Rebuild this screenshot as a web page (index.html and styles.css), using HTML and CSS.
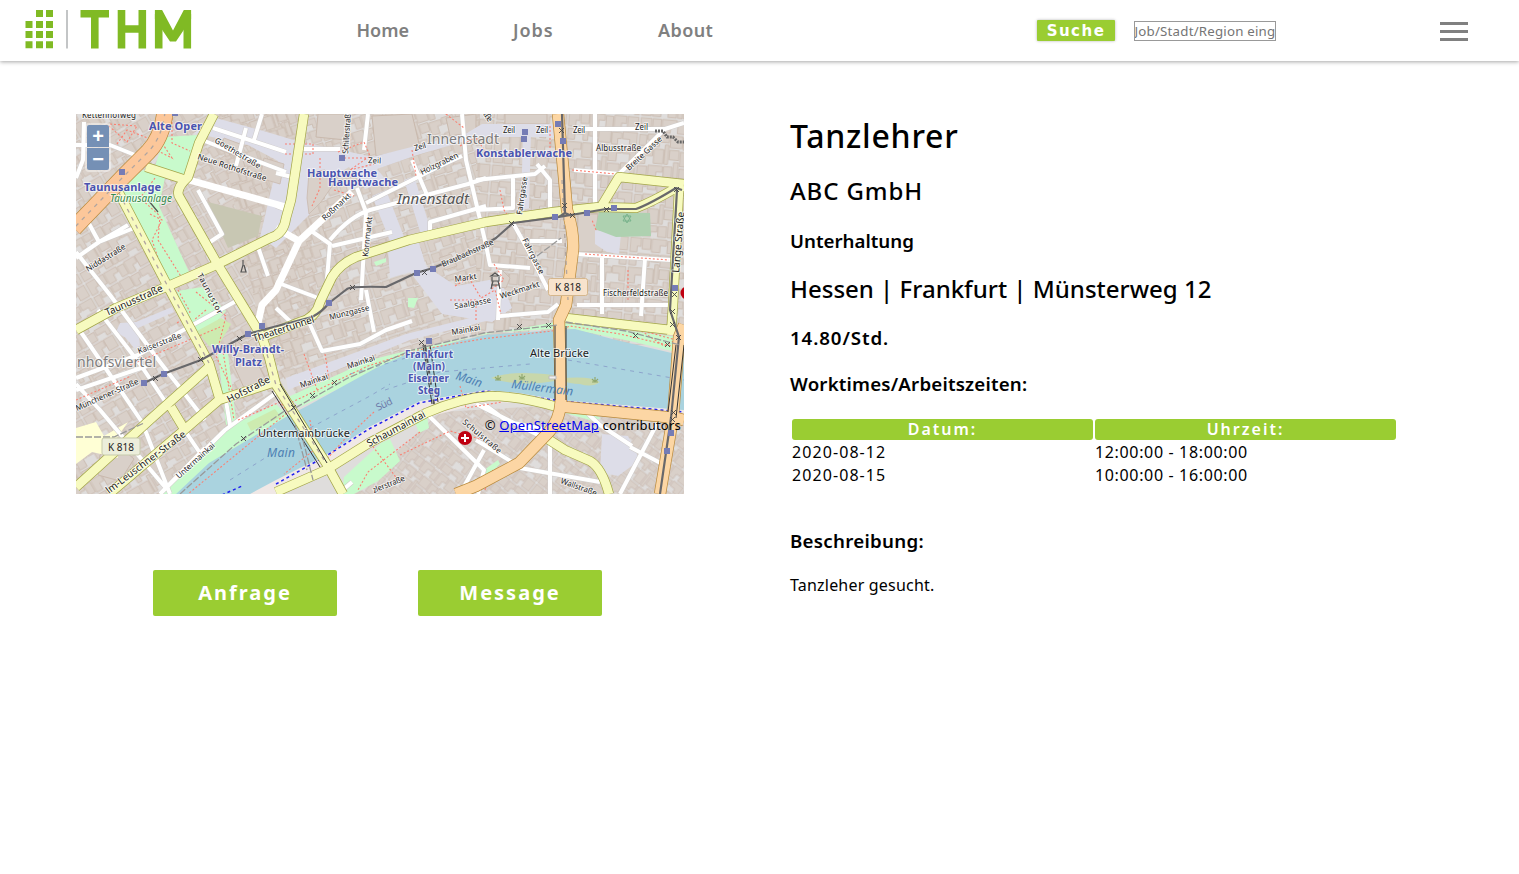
FILE: index.html
```html
<!DOCTYPE html>
<html lang="de">
<head>
<meta charset="utf-8">
<title>Tanzlehrer</title>
<link rel="stylesheet" href="styles.css">
</head>
<body>
<header class="topbar">
  <svg class="logo" width="168" height="40" viewBox="24 9 168 40" role="img" aria-label="THM">
    <g fill="#80ba24">
      <path d="M36 10h7v7h-7zM46 10h7v7h-7zM25.500 21h7v7h-7zM36 21h7v7h-7zM46 21h7v7h-7zM25.500 31h7v7h-7zM36 31h7v7h-7zM46 31h7v7h-7zM25.500 41.300h7v7h-7zM36 41.300h7v7h-7zM46 41.300h7v7h-7z"/>
    </g>
    <path d="M67 10V48.500" stroke="#b4b7b8" stroke-width="1.600"/>
    <g fill="none" stroke="#80ba24" stroke-width="7.600">
      <path d="M80.500 13.700H109M94.800 13V48.500"/>
      <path d="M121.500 10V48.500M142.300 10V48.500M121.500 29H142.300"/>
      <path d="M158.700 48.500V14M187.300 48.500V14"/>
    </g>
    <path fill="#80ba24" d="M154.900 10h7.200L173 30.500 183.800 10h7.300v9L176 41.500h-6L154.900 19z"/>
  </svg>
  <nav class="nav"><a class="n-home">Home</a><a class="n-jobs">Jobs</a><a class="n-about">About</a></nav>
  <button class="search-btn">Suche</button>
  <input class="search-input" placeholder="Job/Stadt/Region eingeben">
  <div class="burger"><i></i><i></i><i></i></div>
</header>
<main class="page">
  <section class="left">
    <div class="map">
      <svg class="map-svg" width="608" height="380" viewBox="76 114 608 380">
        <defs>
          <g id="blocks" fill="#d9d0c9" stroke="#c9b9ad" stroke-width=".7">
            <path d="M1 1h9v7h-3v5h-6zM11 1h7v9h-7zM19 1h12v5h-5v6h-7zM32 2h6v10h-6zM39 1h10v6h-4v6h-6zM50 1h9v11h-9z"/>
            <path d="M1 15h6v9h-6zM8 14h10v10h-4v-5h-6zM19 14h7v6h-7zM27 14h10v10h-10zM38 15h8v5h-3v5h-5zM47 14h12v10h-6v-4h-6z"/>
            <path d="M1 26h12v6h-6v7h-6zM14 26h8v12h-8zM23 22h3v16h-3zM27 26h8v8h-8zM36 27h11v5h-4v7h-7zM48 26h11v12h-5v-6h-6z"/>
            <path d="M1 41h8v8h-8zM10 40h12v5h-5v4h-7zM23 40h7v9h-7zM31 36h4v13h-4zM36 41h10v8h-10zM47 40h12v9h-4v-4h-8z"/>
          </g>
          <pattern id="b1" width="60" height="50" patternUnits="userSpaceOnUse" patternTransform="rotate(-30) scale(1.15)"><use href="#blocks"/></pattern>
          <pattern id="b2" width="60" height="50" patternUnits="userSpaceOnUse" patternTransform="rotate(-18) scale(1.1)"><use href="#blocks"/></pattern>
          <pattern id="b3" width="60" height="50" patternUnits="userSpaceOnUse" patternTransform="rotate(5) scale(1.2)"><use href="#blocks"/></pattern>
          <pattern id="b4" width="60" height="50" patternUnits="userSpaceOnUse" patternTransform="rotate(38)"><use href="#blocks"/></pattern>
        </defs>
        <rect x="76" y="114" width="608" height="380" fill="#dfdddc"/>
        <path fill="url(#b1)" d="M76 114H300L318 306 276 400 160 494H76z"/>
        <path fill="url(#b2)" d="M216 114H480V340L300 400 262 337z"/>
        <path fill="url(#b3)" d="M476 114H684V345H476z"/>
        <path fill="url(#b4)" d="M350 494 440 412 560 405 684 420V494z"/>
        <g fill="#d9d0c9" stroke="#c9b9ad">
          <path d="M318 114h30l-2 26-30-3zM372 116l40-2 8 34-44 8zM505 114h42v10h-42zM578 214h20l-2 20 8 4-2 14h-25zM236 340l18 16 14 28-22 8-12-26z"/>
          <path d="M100 455l18-10 16 14-14 22-22-6zM446 118l30-4v18l-26 4z"/>
        </g>

        <!-- pedestrian areas -->
        <g fill="#dddde8">
          <path d="M216 118l44 12 44 13 42 8 26 6 95-24 15-9h75v13h-78l-62 18-40 14 10 12-22 8-16-22-16 10-24 38-16 16-17 17-16-11 18-76-30-16-54-12z"/>
          <path d="M372 196l14-6 20 52-14 4zM404 180l10-4 18 58-10 4z"/>
          <path d="M388 250l30-10 8 26 30 20 44-8 12 30-20 14-50-8-32-42-20 6zM523 132h8l-2 76-8 2zM595 230l26 4-2 20-12-2-12-8z"/>
          <path d="M120 323l16-1 36-15 2 5-36 16 2 18-6 2-8-10-10-6zM286 378l120-44 80-20v7l-76 19-122 50z"/>
          <path d="M602 434l26 2 12 24-22 16-18-4z"/>
        </g>
        <g fill="#d9d0c9" stroke="#c9b9ad" stroke-width=".8">
          <path d="M309 172l16-2 10 12-14 20-12 12-2-16zM224 138l16 6-4 12-16-6zM264 158l20 6-4 20-20-6zM490 274l12-4 8 8-4 10-14-2zM439 258l12-4 6 12-12 4zM370 244l20-2-8 24h-10z"/>
        </g>
        <g fill="#c8facc">
          <path d="M164 137l33-2-10 42-11-2-21-9 4-12zM143 170l22 8-6 28 30 66 5 5-25 9-40-70-12-26zM177 291l25-4 24 24-18 20-18 6z"/>
          <path d="M218 354l10 0 8 66-10 5zM233 425l43-21 12 12-110 78h-17z"/>
          <path d="M288 397l82-37 40-10 72-15 74-13 14 2 108 13-2 15-46-11-64-13-80 5-76 22-110 52z"/>
          <path d="M344 477l37-34 9-4 10 22-22 20-24 13h-12zM415 422l12-6 2 12-10 5zM374 262l12-4v4l-10 4zM408 298l10 0-4 10-6-1zM565 413l18-2 18 7-8 3z"/>
          <path d="M484 470l14-10 2 4-14 13z"/>
        </g>
        <path d="M197 331l24-13 10 6-14 24-8-2zM247 423l28-14 6 8-30 14z" fill="#cdebb0"/>
        <path d="M208 202l54 14-4 20-30 12z" fill="#c8c7b3"/>
        <path d="M599 212l51 1 1 23-35 1-21-8z" fill="#aed1b0"/>
        <path d="M76 428l20-6 8 14 24-14-14 20 4 16-26-6-16 12z" fill="#ffffd5"/>

        <!-- river -->
        <path fill="#f0e8e6" d="M250 494l26-17 50-26 44-27 50-25 66-12 34 4 42 8 122 11v9l-122-10-42-6-34-1-58 15-50 26-52 26-47 25z"/>
        <path fill="#aad3df" d="M176 494L209 463 286 417 309 405 376 368 409 353 486 335 557 330 575 329 616 340 676 354 684 355V410L560 400 519 393 486 390 420 401 369 427 326 455 276 480 250 494z"/>
        <path d="M491 378q18-8 62-3l5 4q30-4 42 3-8 6-20 2-10 0-20-4-40 8-69-2z" fill="#c8d7ab"/>
        <path d="M310 428l60-32 20-12M350 374l70-20M385 390l55-18 90-8M568 360l116 20M230 480l35-22" fill="none" stroke="#8da5cc" stroke-width="1" stroke-dasharray="4 5"/>
        <path d="M276 483L326 455 369 428 419 402 486 390 519 394 561 400 684 411M222 494l20-9" transform="translate(0 1)" fill="none" stroke="#2020ef" stroke-width="1.500" stroke-dasharray="3 3"/>

        <!-- minor streets -->
        <g fill="none" stroke="#cfccca" stroke-width="5"><use href="#streets"/></g>
        <g fill="none" stroke="#fff" stroke-width="4" stroke-linejoin="round">
          <g id="streets">
            <path d="M76 145H110L135 155M84 122L83 160 76 178M87 220L99 242 128 225M76 258L99 242 139 226M76 252L110 295 160 362 205 420M76 325L100 360 142 422 170 494M76 384L100 410 165 487M98 310L140 364 200 453M76 378L138 355 238 300M76 390L147 366M205 448L160 494M160 494L225 430 280 390M225 395L230 425"/>
            <path d="M198 190L222 234 210 242M213 128L286 152M246 128L236 166M262 114L254 140M202 140L286 172M257 244L268 276M368 114L364 150M303 149H340M276 173L292 177M276 206L286 210M310 230L330 244 326 290"/>
            <path d="M357 188L366 212 361 300M332 246L392 232M330 240Q350 216 370 210L468 184 486 178M366 203L440 166 462 156M412 160L430 202M462 114L466 160 486 245M430 232V222L486 206"/>
            <path d="M276 282L318 298M308 320L322 351 360 344 386 330 412 321M366 290L374 332M276 308L294 325"/>
            <path d="M574 129H665L684 123M595 114V206M574 170L620 174M665 129L618 175M537 164L550 180V208M476 180L535 174 545 166M513 178V208L476 210M486 245L490 265 530 268M513 223L528 250 548 290M530 241H562M575 254L671 260M602 254V314M645 258L641 316M577 305H671M500 316L548 312 558 304M500 270L498 320"/>
            <path d="M428 415L484 470 478 494M484 450L460 494M484 404L508 422 548 430M476 404L560 446M585 411L600 425 632 446M550 440V494M520 468L600 482M620 494L660 418M670 468L630 447M476 440L512 462M338 494L352 482"/>
          </g>
        </g>
        <path d="M189 180L286 207M276 228L299 241M255 337L262 305 276 290 299 241 352 192" fill="none" stroke="#fff" stroke-width="7" stroke-linejoin="round"/>

        <!-- footways -->
        <g fill="none" stroke="#fa8072" stroke-width="1.100" stroke-dasharray="2 2">
          <path d="M109 126l18 16 10-16-28-2M117 144l10-14 26 10M172 118v25l18 8M160 140l12 18-20-10M155 178l-15 20 20 18-2 24 24 38-20 10M150 214l12 6-10 20 10 30M178 290l12 22-14 12M196 292l30 24-10 40 20 42M206 310l-12 10"/>
          <path d="M130 365l90-38M76 400l55-24M222 345l12 75M238 420l42-18 8 10-100 82M288 404l80-38 50-16 64-11 78-9 10-4 50 8 60 14M304 354l14 38M325 354l4 26M310 420l4 30-30 24"/>
          <path d="M285 144h28v10h-28M338 152l26-10 6 14-20 14M340 158h30M320 158v30l-8 18M412 150l4 26M350 170l24-6M334 190l20 6M460 146l14-8M455 286l14-8 12 20 14-8 6 24M450 300h26v20M494 264l10 16-14 10M446 114l18 14"/>
          <path d="M476 138l14 20M550 126v28M572 170l44 4M596 230l-4-10M585 254l84 6M628 270v30M500 190l4 20 8 12M374 412l-30 28-20 22M420 432l-52 40-10 18M368 440l30 40M400 455l50-24 30 8M460 386l6 22 36-6M485 490l8-20M640 330l36 10-12 6z"/>
        </g>

        <!-- main roads: casing then fill -->
        <g fill="none" stroke="#a3a548" stroke-width="10" stroke-linejoin="round"><use href="#yellow"/></g>
        <g fill="none" stroke="#f7fabf" stroke-width="8.600" stroke-linejoin="round">
          <g id="yellow">
            <path d="M76 330L116 308 166 287 216 265 270 238Q284 234 286 218L291 200 304 114M76 487L153 417 209 367M109 494L176 437 219 400 272 383M171 407L183 427M146 167L186 180"/>
            <path d="M119 193L166 283 209 363 219 397M214 114L199 143 188 177Q174 190 180 198L218 265 262 337 269 357 276 385 326 463 343 494"/>
            <path d="M262 337L300 322Q316 318 320 302L332 277Q340 264 356 257L409 240 486 222 553 212 599 207 636 208Q652 202 676 188L684 187M601 207L619 177 684 184M679 190L673 305 671 335M566 318L671 330"/>
            <path d="M276 492L326 470 369 443 426 413Q460 398 490 396Q520 396 561 408M543 436L565 450 590 461Q602 468 609 494"/>
          </g>
        </g>
        <g fill="none" stroke="#b98a3c" stroke-width="12.200" stroke-linejoin="round"><use href="#orange"/></g>
        <g fill="none" stroke="#fcd6a4" stroke-width="10.800" stroke-linejoin="round">
          <g id="orange">
            <path d="M558 114L564 177 567 210Q574 232 573 250L566 305 559 320 561 400Q560 422 546 435L519 463 476 486 456 494M556 406L676 418 684 420M684 325L679 337 673 417 660 494"/>
          </g>
        </g>
        <path d="M165 112Q162 138 148 152L124 176 74 228" fill="none" stroke="#b98a3c" stroke-width="17"/>
        <path d="M165 112Q162 138 148 152L124 176 74 228" fill="none" stroke="#fcc79a" stroke-width="15.600"/>
        <path d="M165 112Q162 138 148 152L124 176 74 228M119 193L166 283 209 363M262 337L276 385 326 463M562 180L568 300" fill="none" stroke="#b0a5a0" stroke-width="1.300" stroke-dasharray="4 5"/>
        <path d="M280 384L327 463M272 391L320 467M555 326V400M566 326V400M423 345L432 404M430 345L438 402M676 345L668 412M684 345L676 418" stroke="#333" fill="none"/>
        <path d="M425 345L434 404" stroke="#555" stroke-width="2" stroke-dasharray="7 4"/>

        <!-- rail and tram -->
        <g fill="none" stroke="#68686b" stroke-width="2.200" stroke-linejoin="round">
          <path d="M144 383L163 374 201 360 248 334 262 330 312 317Q322 312 329 303L347 289Q352 286 386 287L416 273 433 268 476 250 496 238 513 223 559 217 606 209H636Q650 204 676 188L682 190M562 114L565 213 559 217M565 213L572 216M677 190L670 310 679 337 671 418 660 494"/>
        </g>
        <path d="M288 412l60-34 64-28 72-17 74-8M566 322l60 9 54 14M180 494l56-50 50-34M76 437h38l30-14M303 440l10 40M295 425l12 45M537 256l24-18" fill="none" stroke="#999" stroke-width="1.300" stroke-dasharray="7 2"/>
        <path d="M655 131h8l4 6h6l5 5h6" stroke="#666" stroke-width="3" fill="none" stroke-dasharray="2 1"/>
        <g fill="#757cb5">
          <path d="M119 169h6v6h-6zM339 155h6v6h-6zM172 113h6v3h-6zM326 300h6v6h-6zM414 270h6v6h-6zM430 266h6v6h-6zM141 380h6v6h-6zM161 371h6v6h-6zM245 331h6v6h-6zM259 323h6v6h-6zM426 338h6v6h-6zM522 129h6v6h-6zM521 136h6v6h-6zM555 121h6v6h-6zM560 138h6v6h-6zM552 214h6v6h-6zM584 210h6v6h-6zM611 205h6v6h-6zM672 285h6v6h-6zM668 430h6v6h-6zM664 448h6v6h-6z"/>
        </g>
        <path id="crosses" fill="none" stroke="#444" stroke-width=".9" d="M198 357l5 5m0-5l-5 5M153 376l5 5m0-5l-5 5M237 336l5 5m0-5l-5 5M350 285l5 5m0-5l-5 5M422 270l5 5m0-5l-5 5M332 380l5 5m0-5l-5 5M310 393l5 5m0-5l-5 5M291 405l5 5m0-5l-5 5M241 436l5 5m0-5l-5 5M419 340l5 5m0-5l-5 5M517 324l5 5m0-5l-5 5M546 323l5 5m0-5l-5 5M633 333l5 5m0-5l-5 5M665 342l5 5m0-5l-5 5M509 221l5 5m0-5l-5 5M562 203l5 5m0-5l-5 5M570 213l5 5m0-5l-5 5M604 207l5 5m0-5l-5 5M674 187l5 5m0-5l-5 5M559 128l5 5m0-5l-5 5M672 292l5 5m0-5l-5 5M670 309l5 5m0-5l-5 5M670 322l5 5m0-5l-5 5M676 335l5 5m0-5l-5 5M671 410l5 5m0-5l-5 5M670 417l5 5m0-5l-5 5"/>
        <g fill="none" stroke="#555" stroke-width="1.200">
          <path d="M243 260v5l-2 7h5l-2-7M491 276h8l-4-3zM492 277v4h7v-4M493 281l-2 8M498 281l2 8M491 285h9M148 200l10 12"/>
          <path d="M498 375v5m-3-3l3 3 3-3m-6 3h6M522 374v5m-3-3l3 3 3-3m-6 3h6M595 377v5m-3-3l3 3 3-3m-6 3h6" stroke="#90a870"/>
          <path d="M627 214l4 7h-8zM627 223l4-7h-8z" stroke="#70ad85" stroke-width=".8"/>
        </g>
        <path d="M549 376h7v3h-7z" fill="#eee" stroke="#bbb"/>
        <circle cx="465" cy="438" r="7" fill="#bf0010"/><path d="M465 434v8M461 438h8" stroke="#fff" stroke-width="2"/>
        <circle cx="687" cy="293" r="6.500" fill="#bf0010"/>

        <!-- labels -->
        <g class="lbl">
          <g class="station">
            <text x="149" y="130" textLength="53">Alte Oper</text>
            <text x="84" y="191" textLength="77">Taunusanlage</text>
            <text x="307" y="177" textLength="70">Hauptwache</text>
            <text x="328" y="186" textLength="70">Hauptwache</text>
            <text x="476" y="157" textLength="96">Konstablerwache</text>
            <text x="212" y="353" textLength="72">Willy-Brandt-</text>
            <text x="235" y="366" textLength="27">Platz</text>
            <text class="s10" x="405" y="358" textLength="48">Frankfurt</text>
            <text class="s10" x="413" y="370" textLength="32">(Main)</text>
            <text class="s10" x="408" y="382" textLength="41">Eiserner</text>
            <text class="s10" x="418" y="394" textLength="22">Steg</text>
          </g>
          <text class="park" x="110" y="202" textLength="62">Taunusanlage</text>
          <text class="quarter" x="427" y="144" textLength="72">Innenstadt</text>
          <text class="quarter" x="77" y="367" textLength="79">nhofsviertel</text>
          <text class="district" x="397" y="204" textLength="72">Innenstadt</text>
          <g class="water">
            <text transform="translate(267 457)" textLength="28">Main</text>
            <text transform="translate(455 379) rotate(18)" textLength="27">Main</text>
            <text transform="translate(511 388) rotate(7)" textLength="62">Müllermain</text>
            <text class="sued" transform="translate(378 411) rotate(-26)" textLength="17">Süd</text>
          </g>
          <text class="t11" x="258" y="437" textLength="92">Untermainbrücke</text>
          <text class="t11" x="530" y="357" textLength="59">Alte Brücke</text>
          <g class="big">
            <text transform="translate(107 316) rotate(-24)" textLength="62">Taunusstraße</text>
            <text transform="translate(254 342) rotate(-18)" textLength="64">Theatertunnel</text>
            <text transform="translate(229 403) rotate(-27)" textLength="47">Hofstraße</text>
            <text transform="translate(369 447) rotate(-28)" textLength="65">Schaumainkai</text>
            <text transform="translate(109 494) rotate(-37)" textLength="97">lm-Leuschner-Straße</text>
            <text transform="translate(679 273) rotate(-85)" textLength="61">Lange Straße</text>
          </g>
          <g class="small">
            <text transform="translate(82 118)" textLength="54">Kettenhofweg</text>
            <text transform="translate(214 142) rotate(31)" textLength="52">Goethestraße</text>
            <text transform="translate(197 159) rotate(18)" textLength="72">Neue Rothofstraße</text>
            <text transform="translate(88 272) rotate(-32)" textLength="45">Niddastraße</text>
            <text transform="translate(197 275) rotate(62)" textLength="45">Taunustor</text>
            <text transform="translate(139 354) rotate(-21)" textLength="46">Kaiserstraße</text>
            <text transform="translate(77 411) rotate(-24)" textLength="68">Münchener-Straße</text>
            <text transform="translate(179 479) rotate(-42)" textLength="49">Untermainkai</text>
            <text transform="translate(301 388) rotate(-19)" textLength="29">Mainkai</text>
            <text transform="translate(348 369) rotate(-18)" textLength="29">Mainkai</text>
            <text transform="translate(452 335) rotate(-10)" textLength="29">Mainkai</text>
            <text transform="translate(330 320) rotate(-14)" textLength="41">Münzgasse</text>
            <text transform="translate(325 221) rotate(-43)" textLength="36">Roßmarkt</text>
            <text transform="translate(368 257) rotate(-84)" textLength="40">Kornmarkt</text>
            <text transform="translate(348 154) rotate(-86)" textLength="44">Schillerstraße</text>
            <text transform="translate(368 163) rotate(2)" textLength="13">Zeil</text>
            <text transform="translate(415 151) rotate(-16)" textLength="12">Zeil</text>
            <text x="503" y="133" textLength="12">Zeil</text><text x="536" y="133" textLength="12">Zeil</text><text x="573" y="133" textLength="12">Zeil</text><text x="635" y="130" textLength="13">Zeil</text>
            <text transform="translate(422 175) rotate(-26)" textLength="41">Holzgraben</text>
            <text transform="translate(443 267) rotate(-24)" textLength="56">Braubachstraße</text>
            <text transform="translate(455 282) rotate(-8)" textLength="22">Markt</text>
            <text transform="translate(455 309) rotate(-10)" textLength="37">Saalgasse</text>
            <text transform="translate(501 299) rotate(-18)" textLength="41">Weckmarkt</text>
            <text transform="translate(522 215) rotate(-82)" textLength="38">Fahrgasse</text>
            <text transform="translate(522 240) rotate(63)" textLength="39">Fahrgasse</text>
            <text x="596" y="151" textLength="45">Albusstraße</text>
            <text transform="translate(629 171) rotate(-43)" textLength="46">Breite Gasse</text>
            <text x="603" y="296" textLength="65">Fischerfeldstraße</text>
            <text transform="translate(462 423) rotate(40)" textLength="48">Schulstraße</text>
            <text transform="translate(560 483) rotate(20)" textLength="38">Wallstraße</text>
            <text transform="translate(374 493) rotate(-22)" textLength="34">zlerstraße</text>
            <text transform="translate(483 114) rotate(57)" textLength="10">aße</text>
          </g>
          <rect x="102" y="438" width="38" height="17" rx="2" fill="#eceedb" stroke="#c7caab"/>
          <text class="shield" x="108" y="451" textLength="26">K 818</text>
          <rect x="548.500" y="278.500" width="39" height="17" rx="2" fill="#f7e3cd" stroke="#d5b78d"/>
          <text class="shield" x="555" y="291" textLength="26">K 818</text>
        </g>
      </svg>
      <div class="zoomctl"><button>+</button><button>−</button></div>
      <div class="attribution">© <a href="#">OpenStreetMap</a> contributors</div>
    </div>
    <div class="actions"><button class="action">Anfrage</button><button class="action">Message</button></div>
  </section>
  <section class="details">
    <h1>Tanzlehrer</h1>
    <h2 class="company">ABC GmbH</h2>
    <h3 class="category">Unterhaltung</h3>
    <h2 class="place">Hessen | Frankfurt | Münsterweg 12</h2>
    <h3 class="wage">14.80/Std.</h3>
    <h3 class="times">Worktimes/Arbeitszeiten:</h3>
    <div class="grid">
      <div class="th">Datum:</div><div class="th">Uhrzeit:</div>
      <div class="td date">2020-08-12</div><div class="td">12:00:00 - 18:00:00</div>
      <div class="td date">2020-08-15</div><div class="td">10:00:00 - 16:00:00</div>
    </div>
    <h3 class="desc">Beschreibung:</h3>
    <p class="text">Tanzleher gesucht.</p>
  </section>
</main>
</body>
</html>
```
FILE: styles.css
```css
* { box-sizing: border-box; }
body { margin: 0; background: #fff; color: #000; font-family: "Noto Sans", sans-serif; overflow: hidden; }
button { font-family: inherit; border: 0; padding: 0; }

.topbar { display: flex; align-items: flex-start; height: 61px; padding-left: 24px; background: #fff; box-shadow: 0 1px 4px rgba(0,0,0,.35); }
.logo { margin-top: 9px; flex: none; }
.nav { display: flex; margin-left: 164.500px; width: 681px; padding-top: 18px; font-size: 18px; line-height: 24px; font-weight: 600; color: #808080; }
.n-home { width: 156.500px; }
.n-jobs { width: 145px; letter-spacing: .9px; }
.n-about { letter-spacing: .4px; }
.search-btn { flex: none; width: 78px; height: 21px; margin: 20px 0 0 -.5px; padding-top: 1px; background: #9acd32; color: #fff; font: bold 15px/20px "DejaVu Sans", sans-serif; letter-spacing: 1.500px; border-radius: 1px; box-shadow: 0 0 3px rgba(0,0,0,.3); }
.search-input { flex: none; width: 142px; height: 20px; margin: 21px 0 0 18.500px; padding: 0; border: 1px solid #999; outline: 0; font: 13.300px "Noto Sans", sans-serif; letter-spacing: .2px; }
.search-input::placeholder { color: #757575; }
.burger { display: grid; gap: 5px; width: 28px; margin: 22px 0 0 164.500px; }
.burger i { height: 3px; background: #808080; }

.page { display: flex; padding-top: 53px; }
.left { width: 608px; margin-left: 76px; }
.map { position: relative; width: 608px; height: 380px; overflow: hidden; }
.map-svg { display: block; }
.lbl { font-family: "Noto Sans", sans-serif; }
.lbl text { paint-order: stroke; stroke: rgba(255,255,255,.65); stroke-width: 2px; fill: #222; stroke-linejoin: round; }
.lbl .station text { fill: #4a54b0; font-weight: 700; font-size: 11px; }
.lbl .station .s10 { font-size: 10px; }
.lbl .park { fill: #36894c; font-style: italic; font-size: 10px; }
.lbl .quarter { fill: #7d7c7c; font-size: 14px; }
.lbl .district { fill: #555; font-size: 15px; font-style: italic; }
.lbl .water text { fill: #4d80b3; font-size: 12px; font-style: italic; stroke-width: 0; }
.lbl .water .sued { fill: #6e7baa; font-size: 10px; font-style: normal; }
.lbl .t11 { font-size: 11px; }
.lbl .big text { font-size: 10px; }
.lbl .small text { font-size: 8px; }
.lbl .shield { font-size: 10px; stroke-width: 0; }
.zoomctl { position: absolute; left: 9px; top: 9px; width: 26px; padding: 2px; display: grid; gap: 1px; border-radius: 4px; background: rgba(255,255,255,.4); }
.zoomctl button { height: 22px; background: #7590b5; color: #fff; font: bold 20px/22px "Liberation Sans", sans-serif; border-radius: 2px 2px 0 0; }
.zoomctl button + button { border-radius: 0 0 2px 2px; }
.attribution { position: absolute; right: 3px; bottom: 60px; font-size: 13px; line-height: 18px; letter-spacing: .22px; white-space: nowrap; }
.attribution a { color: #00e; }

.actions { display: flex; gap: 81px; margin: 76px 0 0 77px; }
.action { width: 184px; height: 46px; padding-bottom: 2px; background: #9acd32; border-radius: 2px; color: #fff; font-size: 20px; font-weight: 700; letter-spacing: 2px; }

.details { width: 606px; margin-left: 106px; }
h1, h2, h3, p { margin: 0; white-space: nowrap; }
h1 { margin-top: 2px; font-size: 32px; line-height: 40px; font-weight: 500; letter-spacing: .75px; }
h2 { font-size: 24px; line-height: 30px; font-weight: 500; }
h3 { font-size: 18.720px; line-height: 24px; font-weight: 600; }
.company { margin-top: 20px; letter-spacing: .9px; }
.category { margin-top: 23px; }
.place { margin-top: 21px; }
.wage { margin-top: 22px; letter-spacing: .9px; }
.times { margin-top: 22px; letter-spacing: .18px; }
.grid { display: grid; grid-template-columns: 301px 301px; gap: 2px; margin: 23px 0 0 2px; }
.th { height: 21px; background: #9acd32; color: #fff; border-radius: 3px; text-align: center; font-size: 16px; line-height: 21px; font-weight: 600; letter-spacing: 2px; }
.td { height: 21px; font-size: 16px; line-height: 21px; letter-spacing: .65px; }
.date { letter-spacing: 1.080px; }
.desc { margin-top: 43px; letter-spacing: .28px; }
.text { margin-top: 21px; font-size: 16px; line-height: 22px; letter-spacing: .2px; }
```
